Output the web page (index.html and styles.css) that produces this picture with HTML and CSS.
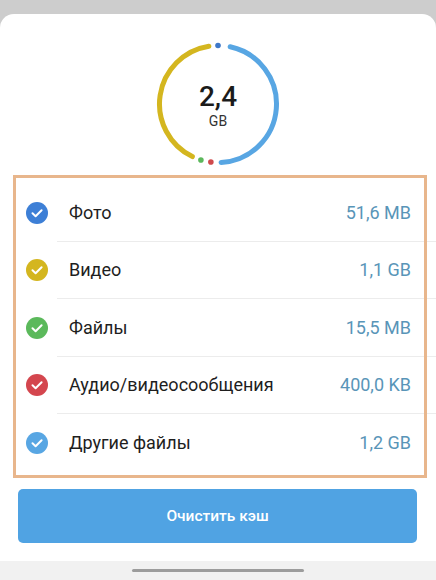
FILE: index.html
```html
<!DOCTYPE html>
<html lang="ru">
<head>
<meta charset="utf-8">
<link rel="stylesheet" href="styles.css">
</head>
<body>
<div class="screen">
  <div class="sheet">
    <div class="chart">
      <svg class="ring" width="124" height="124" viewBox="0 0 124 124">
        <path d="M74.16 4.78 A58.5 58.5 0 0 1 65.06 120.42" fill="none" stroke="#58a6e3" stroke-width="5" stroke-linecap="round"/>
        <path d="M36.35 114.58 A58.5 58.5 0 0 1 52.85 4.22" fill="none" stroke="#d4b61f" stroke-width="5" stroke-linecap="round"/>
        <circle cx="62" cy="3.5" r="2.8" fill="#3f78c8"/>
        <circle cx="54.87" cy="120.06" r="2.8" fill="#cf4a4c"/>
        <circle cx="44.9" cy="117.94" r="2.8" fill="#5cb85c"/>
      </svg>
      <div class="total">
        <div class="total-num">2,4</div>
        <div class="total-unit">GB</div>
      </div>
    </div>

    <div class="list">
      <div class="row">
        <span class="check c-photo"><svg viewBox="0 0 22 22"><path d="M6.5 11.3 L9.6 14.2 L15.6 8.2" fill="none" stroke="#fff" stroke-width="2" stroke-linecap="round" stroke-linejoin="round"/></svg></span>
        <div class="row-body"><span class="label">Фото</span><span class="value">51,6 MB</span></div>
      </div>
      <div class="row">
        <span class="check c-video"><svg viewBox="0 0 22 22"><path d="M6.5 11.3 L9.6 14.2 L15.6 8.2" fill="none" stroke="#fff" stroke-width="2" stroke-linecap="round" stroke-linejoin="round"/></svg></span>
        <div class="row-body"><span class="label">Видео</span><span class="value">1,1 GB</span></div>
      </div>
      <div class="row">
        <span class="check c-files"><svg viewBox="0 0 22 22"><path d="M6.5 11.3 L9.6 14.2 L15.6 8.2" fill="none" stroke="#fff" stroke-width="2" stroke-linecap="round" stroke-linejoin="round"/></svg></span>
        <div class="row-body"><span class="label">Файлы</span><span class="value">15,5 MB</span></div>
      </div>
      <div class="row">
        <span class="check c-audio"><svg viewBox="0 0 22 22"><path d="M6.5 11.3 L9.6 14.2 L15.6 8.2" fill="none" stroke="#fff" stroke-width="2" stroke-linecap="round" stroke-linejoin="round"/></svg></span>
        <div class="row-body"><span class="label">Аудио/видеосообщения</span><span class="value">400,0 KB</span></div>
      </div>
      <div class="row">
        <span class="check c-other"><svg viewBox="0 0 22 22"><path d="M6.5 11.3 L9.6 14.2 L15.6 8.2" fill="none" stroke="#fff" stroke-width="2" stroke-linecap="round" stroke-linejoin="round"/></svg></span>
        <div class="row-body"><span class="label">Другие файлы</span><span class="value">1,2 GB</span></div>
      </div>
    </div>

    <div class="actions">
      <button class="clear-btn">Очистить кэш</button>
    </div>
  </div>
  <div class="navbar"><span class="home-indicator"></span></div>
</div>
</body>
</html>
```

FILE: styles.css
```css
* { box-sizing: border-box; }

html, body {
  margin: 0;
  padding: 0;
}

body {
  background: #cdcdcd;
  font-family: Roboto, "Noto Sans", sans-serif;
  width: 436px;
  height: 580px;
  overflow: hidden;
}

.screen {
  display: flex;
  flex-direction: column;
  height: 580px;
  padding-top: 14px;
}

.sheet {
  background: #fff;
  border-radius: 14px 14px 0 0;
  flex: 1;
  display: flex;
  flex-direction: column;
  padding-top: 28px;
}

.chart {
  display: grid;
  justify-items: center;
  align-items: center;
}

.chart > * {
  grid-area: 1 / 1;
}

.ring {
  display: block;
}

.total {
  display: flex;
  flex-direction: column;
  align-items: center;
  margin-top: 3px;
}

.total-num {
  font-size: 28px;
  font-weight: 500;
  color: #1b1b1b;
  line-height: 32px;
}

.total-unit {
  font-size: 14px;
  color: #333;
  line-height: 17px;
}

.list {
  position: relative;
  margin-top: 18px;
}

.list::after {
  content: "";
  position: absolute;
  left: 13px;
  top: -9px;
  width: 408px;
  height: 297px;
  border: 3px solid #e8b68c;
  pointer-events: none;
}

.row {
  display: flex;
  align-items: stretch;
  height: 57.5px;
}

.check {
  width: 22px;
  height: 22px;
  border-radius: 50%;
  margin: 0 9px 0 26px;
  align-self: center;
  display: flex;
}

.check svg {
  width: 22px;
  height: 22px;
}

.c-photo { background: #3d7fd6; }
.c-video { background: #d4b61f; }
.c-files { background: #5bb95b; }
.c-audio { background: #d4464e; }
.c-other { background: #58a6e3; }

.row-body {
  flex: 1;
  display: flex;
  align-items: center;
  justify-content: space-between;
  padding: 0 25px 0 12px;
  border-bottom: 1px solid #ececec;
}

.row:last-child .row-body {
  border-bottom: none;
}

.label {
  font-size: 18px;
  color: #1e1e1e;
}

.value {
  font-size: 18px;
  color: #5995b8;
}

.actions {
  padding: 17px 19px 18px 18px;
}

.clear-btn {
  display: block;
  width: 100%;
  height: 54px;
  border: none;
  border-radius: 5px;
  background: #50a3e3;
  color: #fff;
  font-family: Roboto, "Noto Sans", sans-serif;
  font-size: 15.5px;
  font-weight: 500;
}

.navbar {
  height: 19px;
  background: #f1f1f1;
  display: flex;
  justify-content: center;
  align-items: center;
}

.home-indicator {
  width: 172px;
  height: 3px;
  border-radius: 2px;
  background: #9c9c9c;
}
```
